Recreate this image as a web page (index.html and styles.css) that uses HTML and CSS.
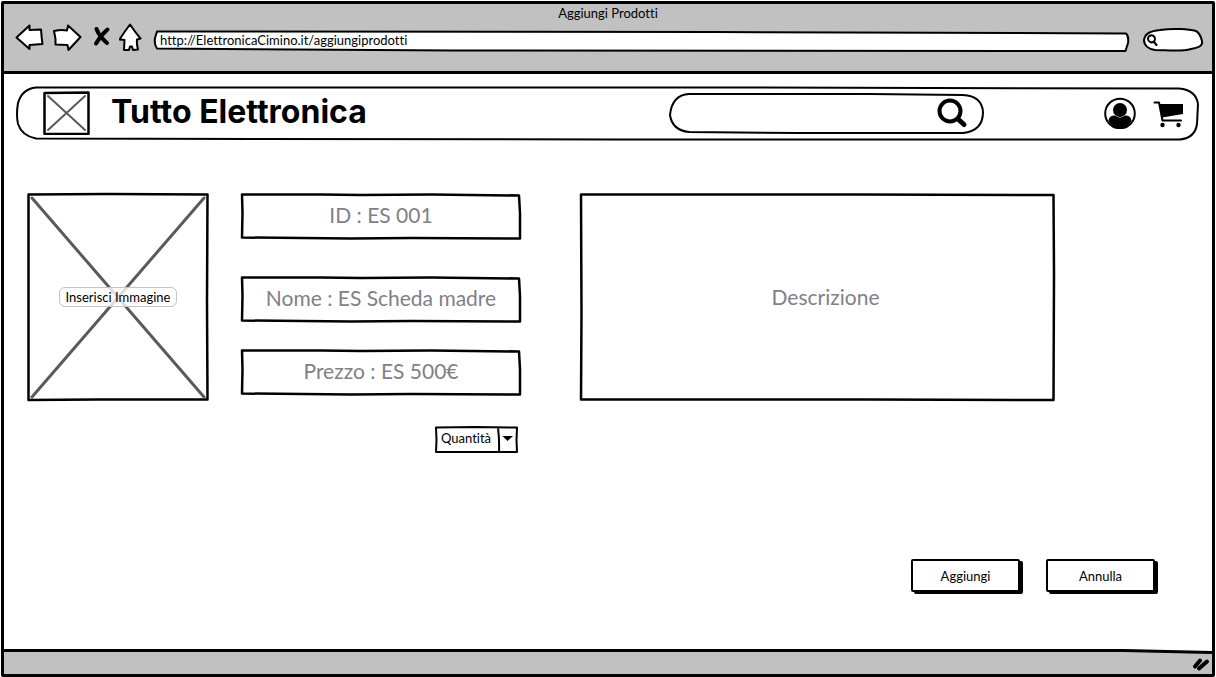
FILE: index.html
```html
<!DOCTYPE html>
<html lang="it">
<head>
<meta charset="utf-8">
<meta name="viewport" content="width=device-width, initial-scale=1">
<title>Aggiungi Prodotti</title>
<link rel="stylesheet" href="styles.css">
</head>
<body>
<div class="window">
  <header class="chrome">
    <div class="chrome-title">Aggiungi Prodotti</div>
    <div class="toolbar">
      <div class="tools">
        <button class="icon-button" type="button" aria-label="Indietro">
          <svg class="icon" width="30" height="30" viewBox="0 0 30 30"><path class="outline" d="M1.500 15.500 L14.500 3.500 V8 L26 7.500 Q26.500 15 27.500 22 L14.500 23 L14.500 27 Z"/></svg>
        </button>
        <button class="icon-button" type="button" aria-label="Avanti">
          <svg class="icon" width="30" height="30" viewBox="0 0 30 30"><path class="outline" d="M1 9 Q8 7.500 14 8.500 L15 3.500 L27.500 15 L15.500 28 L14.500 23 L2.500 22.500 L2.500 17 Z"/></svg>
        </button>
        <button class="icon-button" type="button" aria-label="Ferma">
          <svg class="icon" width="20" height="30" viewBox="0 0 20 30"><path class="cross" d="M5.500 7 Q8 14 16 21 M16.500 7.500 Q10 13 5 21.500"/></svg>
        </button>
        <button class="icon-button" type="button" aria-label="Pagina iniziale">
          <svg class="icon" width="24" height="30" viewBox="0 0 24 30"><path class="outline" d="M11 2.500 Q16 10 21.500 16.500 L18 17.500 Q17.500 22 19 27.500 L14 28 L13 24.500 L11 24.500 L10 28 L5 28 L5.500 18 L0.500 17.500 Q6 9 11 2.500 Z"/></svg>
        </button>
      </div>
      <div class="sketch address">
        <svg class="frame" viewBox="0 0 975 22" preserveAspectRatio="none"><path class="filled stroke-2" d="M3 1.500 L560 2 L972 3.500 Q975 6 974 13 L971.500 21 L300 20.500 L3 18.500 Q0 14 1 8 Z"/></svg>
        <input class="field address-field" type="text" aria-label="Indirizzo" value="http://ElettronicaCimino.it/aggiungiprodotti">
      </div>
      <div class="sketch quick-search">
        <svg class="frame" viewBox="0 0 60 25" preserveAspectRatio="none"><path class="filled stroke-2" d="M1 13 C2 6 8 4 17 3 C30 1 46 2 53 4 C57 6 58 10 59 14 C60 19 55 21 48 22 C38 25 23 23 12 23 C5 22 1 18 1 13 Z"/></svg>
        <svg class="icon" width="12" height="12" viewBox="0 0 12 12"><path class="line stroke-2" d="M8 5 A3.500 3.500 0 1 1 7.900 4 M7 8 L9.500 11"/></svg>
        <input class="field quick-field" type="search" aria-label="Ricerca nel web">
      </div>
    </div>
  </header>

  <div class="page">
    <nav class="sketch navbar">
      <svg class="frame" viewBox="0 0 1183 54" preserveAspectRatio="none"><path class="line stroke-2" d="M20 0.500 L700 0.500 L1163 1.500 Q1180 3 1182 17 L1181 37 Q1179 51 1164 52.500 L600 52.500 L20 51.500 Q6 49 2 37 Q0 28 2 16 Q6 2 20 0.500 Z"/></svg>
      <svg class="logo" viewBox="0 0 47 44" role="img" aria-label="Logo"><path class="line" stroke-width="2.500" d="M1.500 2 L45.500 1.500 L45.500 43 L1.500 43 Z"/><path class="diagonal stroke-2" d="M5 5 L42 39 M42 5 L5 39"/></svg>
      <h1 class="brand">Tutto Elettronica</h1>
      <form class="sketch site-search">
        <svg class="frame" viewBox="0 0 315 41" preserveAspectRatio="none"><path class="line stroke-2" d="M20 1 L200 1 L294 2 Q313 3 314 19 Q314 38 294 40 L130 40 L20 39 Q3 37 1 22 Q3 2 20 1 Z"/></svg>
        <input class="field site-field" type="search" aria-label="Cerca prodotti">
        <button class="icon-button" type="button" aria-label="Cerca">
          <svg class="icon" width="32" height="32" viewBox="0 0 32 32"><circle class="line stroke-4" cx="13" cy="14" r="10.500"/><path class="line stroke-5" d="M21 22 L27 27.500"/></svg>
        </button>
      </form>
      <div class="account">
        <button class="icon-button" type="button" aria-label="Profilo">
          <svg class="icon" width="32" height="32" viewBox="0 0 32 32"><circle class="line stroke-2" cx="16" cy="16.500" r="14.800"/><circle cx="16" cy="13" r="7"/><path d="M4.500 24 C5 19.500 8 18.500 11 18.500 Q16 22.500 21 18.500 C24 18.500 27 19.500 27.500 24 Q23 31.500 16 31.500 Q9 31.500 4.500 24 Z"/></svg>
        </button>
        <button class="icon-button" type="button" aria-label="Carrello">
          <svg class="icon" width="32" height="32" viewBox="0 0 32 32"><path d="M6.500 7 H30 V17 L9 20.500 Z"/><path class="line stroke-2" d="M1.500 5.500 H6 L9.500 23.500 H28"/><circle cx="9.500" cy="28" r="2.200"/><circle cx="25.500" cy="28" r="2.200"/></svg>
        </button>
      </div>
    </nav>

    <form class="product-form">
      <div class="product-grid">
        <div class="sketch picture">
          <svg class="frame" viewBox="0 0 182 208" preserveAspectRatio="none"><path class="line" stroke-width="2.500" d="M1.500 1.500 L80 1 L180.500 1.500 L180 110 L180.500 206.500 L70 206.500 L1.500 207 L1.500 100 Z"/><path class="diagonal stroke-3" d="M5 5 L177 204 M177 5 L5 204"/></svg>
          <button class="picture-button" type="button">Inserisci Immagine</button>
        </div>
        <div class="fields">
          <div class="sketch">
            <svg class="frame" viewBox="0 0 280 47" preserveAspectRatio="none"><path class="line" stroke-width="2.500" d="M1 1.500 L80 1.500 L120 2 L190 1.500 L278 2.500 L279 20 L279 45.500 L170 45 L110 45.500 L1 44.500 L1.500 20 Z"/></svg>
            <input class="field text-field" type="text" aria-label="ID" placeholder="ID : ES 001">
          </div>
          <div class="sketch name-row">
            <svg class="frame" viewBox="0 0 280 47" preserveAspectRatio="none"><path class="line" stroke-width="2.500" d="M1 1.500 L80 1.500 L120 2 L190 1.500 L278 2.500 L279 20 L279 45.500 L170 45 L110 45.500 L1 44.500 L1.500 20 Z"/></svg>
            <input class="field text-field" type="text" aria-label="Nome" placeholder="Nome : ES Scheda madre">
          </div>
          <div class="sketch price-row">
            <svg class="frame" viewBox="0 0 280 47" preserveAspectRatio="none"><path class="line" stroke-width="2.500" d="M1 1.500 L80 1.500 L120 2 L190 1.500 L278 2.500 L279 20 L279 45.500 L170 45 L110 45.500 L1 44.500 L1.500 20 Z"/></svg>
            <input class="field text-field" type="text" aria-label="Prezzo" placeholder="Prezzo : ES 500€">
          </div>
          <div class="sketch quantity">
            <svg class="frame" viewBox="0 0 83 27" preserveAspectRatio="none"><path class="line stroke-2" d="M1 1.500 L40 1 L82 1.500 L81.500 14 L82 26 L1 26 L1.500 14 Z M63 1.500 Q64.500 14 64 26"/><path d="M67.500 10 H78 L72.500 15 Z"/></svg>
            <select class="field quantity-field" aria-label="Quantità"><option>Quantità</option></select>
          </div>
        </div>
        <div class="sketch description">
          <svg class="frame" viewBox="0 0 475 208" preserveAspectRatio="none"><path class="line" stroke-width="2.500" d="M1 1.500 L280 1.500 L473.500 2 L474 80 L473.500 207 L290 206.500 L1 206.500 L1.500 120 Z"/></svg>
          <textarea class="field description-field" aria-label="Descrizione" placeholder="Descrizione"></textarea>
        </div>
      </div>
      <div class="actions">
        <button class="action" type="button">Aggiungi</button>
        <button class="action" type="button">Annulla</button>
      </div>
    </form>
  </div>

  <footer class="status">
    <svg class="frame" viewBox="0 0 1208 25" preserveAspectRatio="none"><path class="status-fill" d="M0 1 H1120 L1208 3 V25 H0 Z"/><path class="line stroke-3" d="M0 1.500 H1120 L1208 3.500"/></svg>
    <svg class="grip" width="18" height="16" viewBox="0 0 18 16"><path class="line stroke-4" d="M3 10.500 L8 4.500 M7 12.500 L15 5.500"/></svg>
  </footer>
</div>
</body>
</html>
```
FILE: styles.css
```css
* { box-sizing: border-box; }

body {
  margin: 0;
  background: #fff;
  color: #000;
  font-family: Lato, "Noto Sans", sans-serif;
  font-size: 13px;
  line-height: 16px;
  font-variant-ligatures: none;
}

button, input, select, textarea {
  margin: 0;
  color: inherit;
  font: inherit;
  font-variant-ligatures: none;
}

.window {
  display: flex;
  flex-direction: column;
  min-height: calc(100vh - 1px);
  margin: 1px 1px 0;
  border: 3px solid #000;
  border-radius: 2px;
}

/* Hand-drawn outlines stretch behind the content of their box */
.sketch { position: relative; }

.frame {
  position: absolute;
  inset: 0;
  width: 100%;
  height: 100%;
  overflow: visible;
  pointer-events: none;
}

.frame path { vector-effect: non-scaling-stroke; }

.line, .filled, .outline, .cross, .diagonal {
  fill: none;
  stroke: #000;
  stroke-linecap: round;
  stroke-linejoin: round;
}

.filled, .outline { fill: #fff; }
.outline { stroke-width: 2px; }
.cross { stroke-width: 4px; }
.diagonal { stroke: #5a5a5a; }
.stroke-2 { stroke-width: 2px; }
.stroke-3 { stroke-width: 3px; }
.stroke-4 { stroke-width: 4px; }
.stroke-5 { stroke-width: 5px; }

.icon { display: block; flex: none; }

.icon-button {
  padding: 0;
  border: 0;
  background: none;
}

.field {
  position: relative;
  display: block;
  width: 100%;
  padding: 0;
  border: 0;
  outline: 0;
  background: transparent;
  appearance: none;
}

/* Browser chrome */
.chrome {
  padding-bottom: 18px;
  border-bottom: 3px solid #000;
  background: #c1c1c1;
}

.chrome-title {
  padding-top: 1px;
  text-align: center;
}

.toolbar {
  display: flex;
  align-items: flex-end;
  gap: 14px;
  padding: 0 9px 1px 11px;
  height: 32px;
}

.tools {
  display: flex;
  gap: 8px;
  margin-right: -3px;
}

.address { flex: 1; }

.address-field {
  height: 22px;
  padding: 0 6px 2px;
}

.quick-search {
  display: flex;
  align-items: center;
  width: 60px;
  height: 25px;
  padding-left: 4px;
}

.quick-search .icon { position: relative; }

/* Page */
.page {
  flex: 1;
  padding: 13px 13px 40px 12px;
}

.navbar {
  display: flex;
  align-items: center;
  height: 54px;
  padding: 0 14px 2px 27px;
}

.logo {
  flex: none;
  width: 47px;
  height: 44px;
}

.brand {
  margin: 0 auto 0 21px;
  padding-bottom: 3px;
  font-family: Inter, Lato, sans-serif;
  font-size: 32px;
  line-height: 40px;
  font-weight: 700;
}

.site-search {
  display: flex;
  align-items: center;
  flex: 0 1 315px;
  height: 41px;
  margin-right: 120px;
  padding: 0 15px;
}

.site-search .icon-button { position: relative; }

.account {
  display: flex;
  gap: 17px;
}

.product-form { padding: 52px 0 0 11px; }

.product-grid {
  display: grid;
  grid-template-columns: 182fr 280fr 502fr;
  gap: 32px;
  padding-right: 144px;
}

.picture {
  display: flex;
  align-items: center;
  justify-content: center;
  height: 208px;
}

.picture-button {
  position: relative;
  padding: 1px 6px;
  border: 1px solid #c4c4c4;
  border-radius: 6px;
  background: rgba(255, 255, 255, 0.8);
}

.text-field {
  height: 47px;
  padding: 0 8px 4px;
  font-size: 21px;
  line-height: 24px;
  text-align: center;
}

.field::placeholder {
  color: #80808a;
  opacity: 1;
}

.name-row { margin-top: 36px; }
.price-row { margin-top: 26px; }

.quantity {
  width: 83px;
  margin: 30px 3px 0 auto;
}

.quantity-field {
  height: 27px;
  padding: 0 20px 4px 6px;
}

.description {
  height: 208px;
  margin-left: 27px;
}

.description-field {
  height: 208px;
  padding: 92px 12px 0 28px;
  font-size: 21px;
  line-height: 24px;
  text-align: center;
  resize: none;
}

.actions {
  display: flex;
  justify-content: flex-end;
  gap: 26px;
  padding: 106px 44px 0 0;
}

.action {
  width: 109px;
  height: 33px;
  border: 2px solid #000;
  border-radius: 2px;
  background: #fff;
  box-shadow: 3px 2px 0 #000;
}

/* Status bar */
.status {
  position: relative;
  display: flex;
  align-items: flex-end;
  justify-content: flex-end;
  height: 25px;
  padding: 0 2px 2px;
}

.status-fill { fill: #c1c1c1; }

.grip { position: relative; }
```
